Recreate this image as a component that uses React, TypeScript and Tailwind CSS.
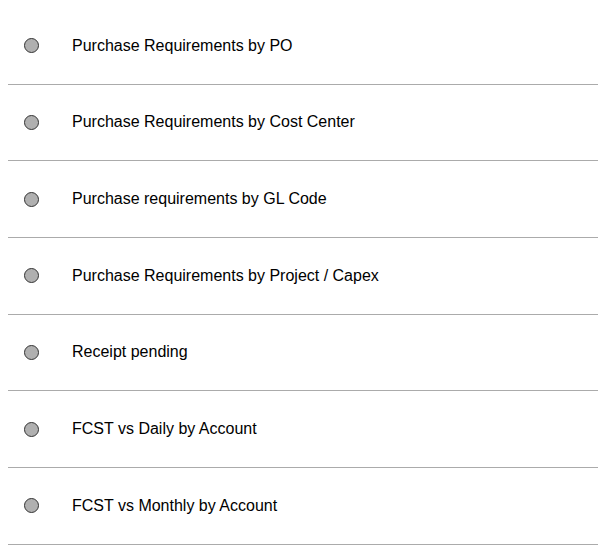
const items = [
  "Purchase Requirements by PO",
  "Purchase Requirements by Cost Center",
  "Purchase requirements by GL Code",
  "Purchase Requirements by Project / Capex",
  "Receipt pending",
  "FCST vs Daily by Account",
  "FCST vs Monthly by Account",
];

export default function App() {
  return (
    <div className="min-h-screen bg-white pt-2 pl-2 font-['Liberation_Sans',Arial,sans-serif] text-black">
      <ul>
        {items.map((label) => (
          <li
            key={label}
            className="flex h-[76.6667px] items-center border-b border-[#ababab]"
          >
            <span className="ml-4 h-[15px] w-[15px] shrink-0 rounded-full border-[1.5px] border-[#333333] bg-[#b0b0b0]" />
            <span className="ml-[33px] text-[16px]">{label}</span>
          </li>
        ))}
      </ul>
    </div>
  );
}
